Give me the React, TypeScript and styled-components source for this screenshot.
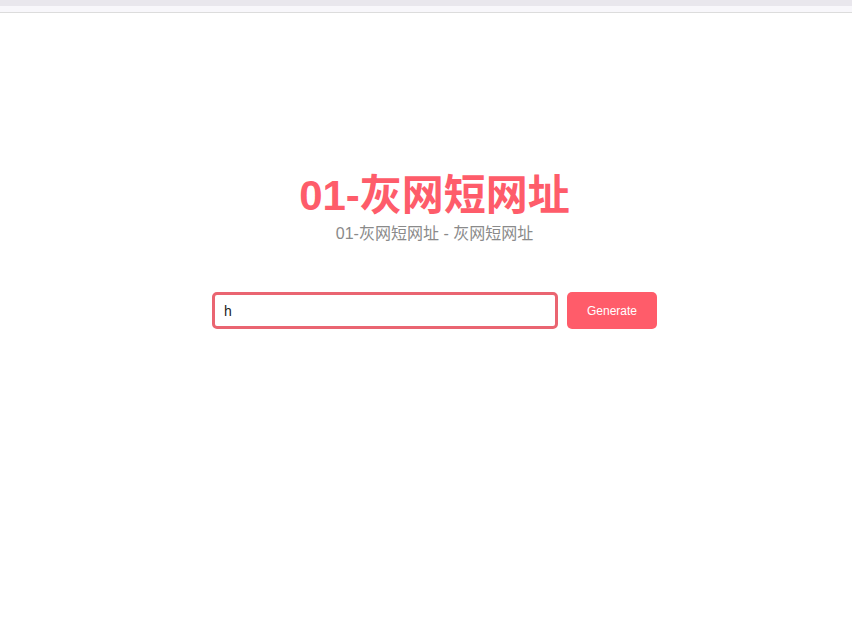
import React, { useState } from "react";
import styled, { createGlobalStyle } from "styled-components";

const GlobalStyle = createGlobalStyle`
  html, body {
    margin: 0;
    padding: 0;
    background: #ffffff;
    font-family: "Liberation Sans", Arial, "Noto Sans CJK SC", sans-serif;
  }
`;

const Page = styled.div`
  min-height: 628px;
  display: flex;
  flex-direction: column;
`;

const BrowserBar = styled.div`
  height: 6px;
  background: #e9e7ed;
`;

const BrowserStrip = styled.div`
  height: 6px;
  background: #f8f7fb;
  border-bottom: 1px solid #dcdcdc;
`;

const Main = styled.main`
  display: flex;
  flex-direction: column;
  align-items: center;
  padding-top: 157px;
  padding-left: 17px;
`;

const Title = styled.h1`
  margin: 0;
  font-size: 42px;
  line-height: 52px;
  font-weight: 700;
  color: #fe5c6a;
  font-family: "Liberation Sans", Arial, "Noto Sans CJK SC", sans-serif;
`;

const Subtitle = styled.p`
  margin: 2px 0 0;
  font-size: 16px;
  line-height: 20px;
  color: #8a8a8a;
  font-family: "Liberation Sans", Arial, "Noto Sans CJK SC", sans-serif;
`;

const Form = styled.form`
  display: flex;
  gap: 9px;
  margin-top: 48px;
`;

const UrlInput = styled.input`
  box-sizing: border-box;
  width: 346px;
  height: 37px;
  padding: 0 9px;
  border: 3px solid #ea6571;
  border-radius: 5px;
  outline: none;
  font-size: 14px;
  color: #222222;
  font-family: "Liberation Sans", Arial, sans-serif;
`;

const GenerateButton = styled.button`
  box-sizing: border-box;
  width: 90px;
  height: 37px;
  border: none;
  border-radius: 5px;
  background: #ff5c6a;
  color: #ffffff;
  font-size: 12px;
  font-family: "Liberation Sans", Arial, sans-serif;
  cursor: pointer;
`;

const App: React.FC = () => {
  const [url, setUrl] = useState<string>("h");

  return (
    <Page>
      <GlobalStyle />
      <BrowserBar />
      <BrowserStrip />
      <Main>
        <Title>01-灰网短网址</Title>
        <Subtitle>01-灰网短网址 - 灰网短网址</Subtitle>
        <Form onSubmit={ e => e.preventDefault() }>
          <UrlInput value={ url } onChange={ e => setUrl( e.target.value ) } />
          <GenerateButton type="submit">Generate</GenerateButton>
        </Form>
      </Main>
    </Page>
  );
};

export default App;
